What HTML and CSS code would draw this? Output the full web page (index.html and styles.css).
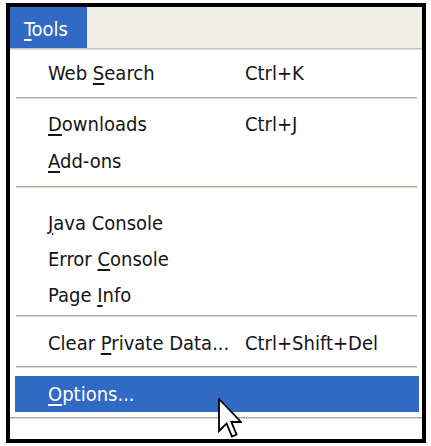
FILE: index.html
```html
<!DOCTYPE html>
<html>
<head>
<meta charset="utf-8">
<link rel="stylesheet" href="styles.css">
</head>
<body>
<div class="window">
  <div class="menubar">
    <span class="menu-title"><u>T</u>ools</span>
  </div>
  <div class="menu">
    <div class="item first"><span class="label">Web <u>S</u>earch</span><span class="key">Ctrl+K</span></div>
    <div class="sep sep-1"></div>
    <div class="item"><span class="label"><u>D</u>ownloads</span><span class="key">Ctrl+J</span></div>
    <div class="item"><span class="label"><u>A</u>dd-ons</span></div>
    <div class="sep sep-2"></div>
    <div class="item short"><span class="label"><u>J</u>ava Console</span></div>
    <div class="item short"><span class="label">Error <u>C</u>onsole</span></div>
    <div class="item short"><span class="label">Page <u>I</u>nfo</span></div>
    <div class="sep sep-3"></div>
    <div class="item"><span class="label">Clear <u>P</u>rivate Data...</span><span class="key">Ctrl+Shift+Del</span></div>
    <div class="sep sep-4"></div>
    <div class="item active"><span class="label"><u>O</u>ptions...</span></div>
    <div class="bottom-line"></div>
  </div>
  <svg class="cursor" width="24" height="41" viewBox="0 0 12 20.5" xmlns="http://www.w3.org/2000/svg">
    <path d="M0.5 0.5 L0.5 16.5 L4.3 12.8 L7 19.3 L9.3 18.3 L6.7 12 L11.5 12 Z" fill="#ffffff" stroke="#000000" stroke-width="0.9" stroke-linejoin="miter"/>
  </svg>
</div>
</body>
</html>
```

FILE: styles.css
```css
html, body {
  margin: 0;
  padding: 0;
  background: #ffffff;
}

body {
  font-family: "DejaVu Sans Condensed", "DejaVu Sans", "Liberation Sans", sans-serif;
  font-stretch: condensed;
  font-size: 20px;
  color: #151515;
}

.window {
  position: relative;
  margin: 3px 0 0 6px;
  width: 420px;
  height: 440px;
  box-sizing: border-box;
  border: 4px solid #000000;
  background: #ffffff;
  display: flex;
  flex-direction: column;
}

.menubar {
  height: 41px;
  background: #efeee8;
  border-bottom: 1px solid #c4c2b6;
  box-shadow: 0 1px 0 #e2e0d8;
  margin-bottom: 1px;
  display: flex;
}

.menu-title {
  width: 77px;
  background: #316ac5;
  color: #ffffff;
  padding-left: 14px;
  padding-top: 3px;
  box-sizing: border-box;
  line-height: 38px;
}

u {
  text-decoration: underline;
  text-decoration-thickness: 1.5px;
  text-underline-offset: 3px;
}

.menu {
  flex: 1;
  display: flex;
  flex-direction: column;
  padding-top: 5px;
}

.item {
  display: grid;
  grid-template-columns: 197px 1fr;
  height: 37px;
  line-height: 37px;
  padding-left: 38px;
  white-space: nowrap;
}

.item.short {
  height: 36px;
  line-height: 36px;
}

.item.active {
  margin: 0 3px 0 5px;
  padding-left: 33px;
  height: 36px;
  line-height: 36px;
  background: #316ac5;
  color: #ffffff;
}

.sep {
  margin-left: 6px;
  margin-right: 5px;
  height: 0;
  border-top: 1px solid #a9a697;
  border-bottom: 1px solid #dedcd3;
}

.sep-1 { margin-top: 5px; margin-bottom: 7px; }
.sep-2 { margin-top: 6px; margin-bottom: 17px; }
.sep-3 { margin-top: 2px; margin-bottom: 8px; }
.sep-4 { margin-top: 4px; margin-bottom: 8px; }

.bottom-line {
  margin-top: 5px;
  border-top: 1px solid #a9a697;
  border-bottom: 1px solid #dedcd3;
}

.cursor {
  position: absolute;
  left: 208px;
  top: 391px;
}
```
